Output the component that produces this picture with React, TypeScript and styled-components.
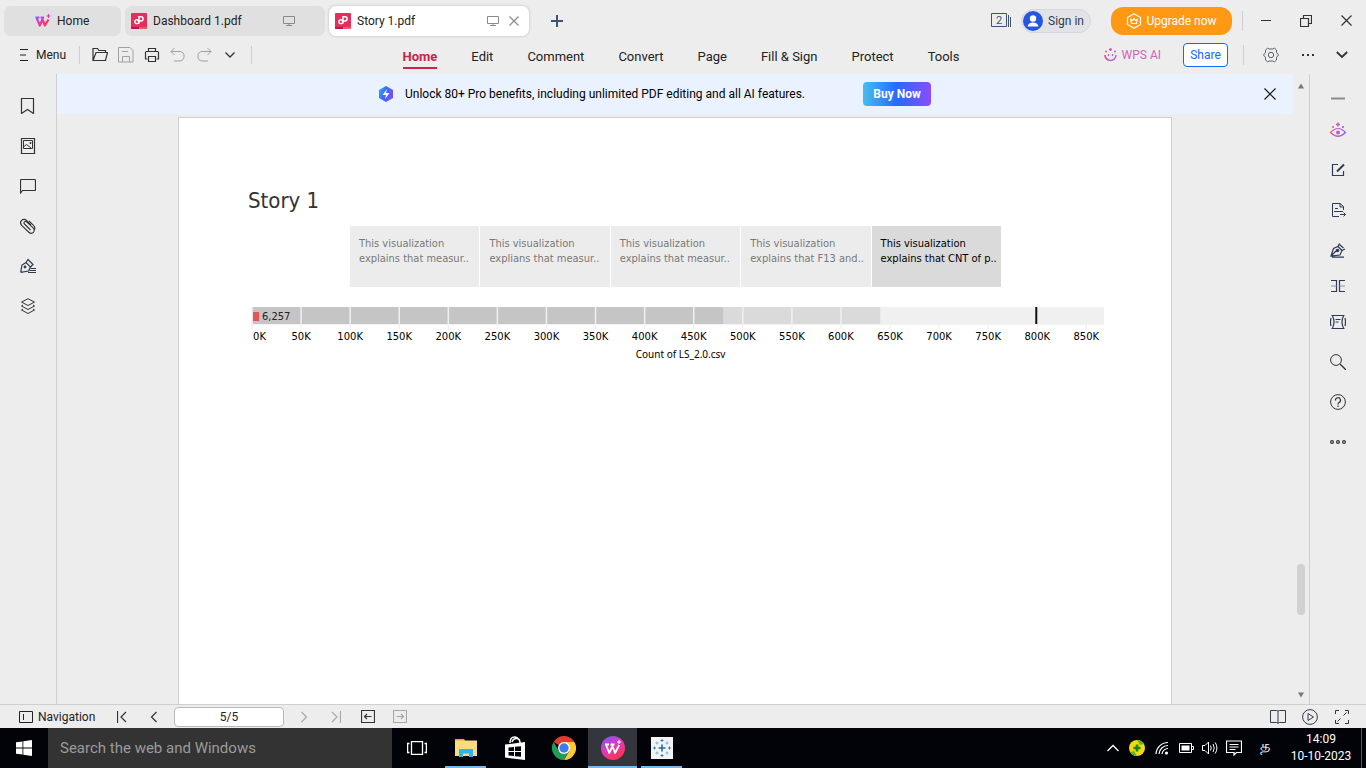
import React, { useState } from "react";
import styled, { createGlobalStyle, css } from "styled-components";

const ui = `Roboto, "Noto Sans", "Liberation Sans", sans-serif`;
const book = `"DejaVu Sans Condensed", "DejaVu Sans", "Noto Sans", sans-serif`;

const GlobalStyle = createGlobalStyle`
  *, *::before, *::after { box-sizing: border-box; }
  body { margin: 0; font-family: ${ui}; font-size: 12px; line-height: 16px; color: #222; background: #ededed; }
  button { font: inherit; color: inherit; background: none; border: 0; padding: 0; margin: 0; cursor: pointer; }
  a { color: inherit; text-decoration: none; }
  h1, p { margin: 0; font-weight: 400; }
  svg { display: block; flex: none; }
`;

/* ---------- layout ---------- */

const Shell = styled.div`
  display: flex;
  flex-direction: column;
  height: 100vh;
  background: #ededed;
`;

const Row = css`
  display: flex;
  align-items: center;
`;

const Spacer = styled.div`
  flex: 1;
`;

const Divider = styled.span<{ $h?: number }>`
  width: 1px;
  height: ${(p) => p.$h ?? 18}px;
  background: #cfcfcf;
`;

const IconButton = styled.button<{ $w?: number; $h?: number; $color?: string }>`
  display: inline-flex;
  align-items: center;
  justify-content: center;
  flex: none;
  width: ${(p) => p.$w ?? 26}px;
  height: ${(p) => p.$h ?? 24}px;
  color: ${(p) => p.$color ?? "#333"};
`;

/* ---------- title bar ---------- */

const TitleBar = styled.header`
  ${Row}
  height: 41px;
  padding: 0 0 0 4px;
  gap: 4px;
`;

const Tab = styled.div<{ $active?: boolean; $home?: boolean }>`
  ${Row}
  width: ${(p) => (p.$home ? 117 : 200)}px;
  height: 30px;
  padding: 0 ${(p) => (p.$active ? 0 : 30)}px 0 ${(p) => (p.$home ? 31 : 6)}px;
  border-radius: 7px;
  background: ${(p) => (p.$active ? "#fff" : "#e0e0e0")};
  box-shadow: ${(p) => (p.$active ? "0 0 2px 1px #d4d4d4" : "none")};
`;

const TabLabel = styled.button`
  ${Row}
  flex: 1;
  gap: 6px;
  text-align: left;
  white-space: nowrap;
`;

const SignIn = styled.button`
  ${Row}
  width: 70px;
  height: 24px;
  gap: 5px;
  margin: 0 16px 0 5px;
  padding: 0 0 0 1px;
  border: 1px solid #d5d7dc;
  border-radius: 12px;
  background: #e2e3e7;
  color: #2f3a55;
`;

const Upgrade = styled.button`
  ${Row}
  justify-content: center;
  width: 121px;
  height: 28px;
  gap: 4px;
  margin-right: 6px;
  border-radius: 12px;
  background: #ff9812;
  color: #fff;
`;

const WindowButtons = styled.div`
  ${Row}
  margin-left: -1px;
`;

/* ---------- tool bar ---------- */

const ToolBar = styled.div`
  display: grid;
  grid-template-columns: 1fr auto 1fr;
  height: 33px;
  padding: 0 0 0 8px;
`;

const ToolGroup = styled.div<{ $end?: boolean }>`
  ${Row}
  height: 28px;
  justify-content: ${(p) => (p.$end ? "flex-end" : "flex-start")};
`;

const MenuButton = styled.button`
  ${Row}
  width: 71px;
  gap: 8px;
  padding-left: 12px;
`;

const GroupEnd = styled(Divider)`
  margin-left: 15px;
`;

const Ribbon = styled.nav`
  display: flex;
  gap: 34px;
  padding: 8px 12px 0 0;
  font-size: 13px;
`;

const RibbonTab = styled.a<{ $active?: boolean }>`
  height: 20px;
  font-weight: ${(p) => (p.$active ? 700 : 400)};
  color: ${(p) => (p.$active ? "#c8234a" : "#222")};
  border-bottom: 2px solid ${(p) => (p.$active ? "#c8234a" : "transparent")};
`;

const WpsAi = styled.button`
  ${Row}
  gap: 5px;
  margin-right: 22px;
  color: #cf63c0;
`;

const Share = styled.button`
  width: 45px;
  height: 24px;
  margin-right: 15px;
  border: 1px solid #0f6bff;
  border-radius: 4px;
  background: #fff;
  color: #0f6bff;
`;

/* ---------- work area ---------- */

const Body = styled.div`
  display: flex;
  flex: 1;
  min-height: 0;
`;

const Rail = styled.aside<{ $side: "left" | "right" }>`
  display: flex;
  flex-direction: column;
  align-items: center;
  flex: none;
  width: 57px;
  padding-top: ${(p) => (p.$side === "left" ? 12 : 13)}px;
  border: 0 solid #cfcfcf;
  border-width: ${(p) => (p.$side === "left" ? "0 1px 0 0" : "0 0 0 1px")};
`;

const Viewer = styled.main`
  display: flex;
  flex-direction: column;
  flex: 1;
  min-width: 0;
  gap: 3px;
  overflow: hidden;
`;

const Banner = styled.div`
  ${Row}
  flex: none;
  height: 40px;
  padding: 0 11px 0 321px;
  background: #ebf2ff;
  color: #000;
`;

const BannerText = styled.p`
  width: 458px;
  margin-left: 11px;
`;

const BuyNow = styled.a`
  width: 68px;
  height: 24px;
  line-height: 24px;
  border-radius: 4px;
  background: linear-gradient(90deg, #45bdf0, #246bff 50%, #8a4df8);
  color: #fff;
  font-weight: 700;
  text-align: center;
`;

const Paper = styled.article`
  flex: 1;
  margin: 0 121px;
  padding: 68px 66px 0 69px;
  border: 1px solid #d0d0d0;
  border-bottom: 0;
  background: #fff;
  font-family: ${book};
`;

const Title = styled.h1`
  font-size: 22px;
  line-height: 30px;
  color: #333;
`;

const StoryPoints = styled.div`
  display: grid;
  grid-template-columns: repeat(5, minmax(0, 1fr));
  gap: 1px;
  margin: 10px 104px 20px 102px;
`;

const StoryPoint = styled.button<{ $active?: boolean }>`
  height: 61px;
  padding: 0 0 11px 9px;
  background: ${(p) => (p.$active ? "#dadada" : "#ececec")};
  color: ${(p) => (p.$active ? "#000" : "#787878")};
  font-family: ${book};
  font-size: 11px;
  line-height: 15px;
  text-align: left;
  white-space: nowrap;
`;

const Chart = styled.svg`
  width: calc(100% - 5px);
  height: 60px;
  margin-left: 4px;
  font-family: "DejaVu Sans", sans-serif;
  font-size: 10px;
  overflow: visible;
`;

const AxisTitle = styled.text`
  font-family: "Noto Sans", sans-serif;
`;

const BarValue = styled.text`
  font-family: ${book};
  font-size: 11px;
  fill: #222;
`;

const ScrollBar = styled.div`
  display: flex;
  flex-direction: column;
  align-items: center;
  flex: none;
  width: 16px;
  padding: 9px 0 6px;
`;

const Track = styled.div`
  flex: 1;
  display: flex;
  flex-direction: column;
  justify-content: flex-end;
  padding-bottom: 77px;
`;

const Thumb = styled.div`
  width: 8px;
  height: 51px;
  border-radius: 4px;
  background: #d1d1d1;
`;

/* ---------- status bar and task bar ---------- */

const StatusBar = styled.footer`
  ${Row}
  flex: none;
  height: 24px;
  padding: 0 8px 0 19px;
  border-top: 1px solid #cfcfcf;
`;

const NavToggle = styled.button`
  ${Row}
  width: 87px;
  gap: 5px;
`;

const PageInput = styled.input`
  width: 110px;
  height: 20px;
  margin: 0 4px;
  padding: 0;
  border: 1px solid #b8b8b8;
  border-radius: 4px;
  background: #fff;
  font: inherit;
  color: #222;
  text-align: center;
`;

const TaskBar = styled.div`
  ${Row}
  flex: none;
  height: 40px;
  background: #010308;
  color: #fff;
`;

const Search = styled.input`
  width: 344px;
  height: 40px;
  padding: 0 12px;
  border: 0;
  background: #333;
  color: #fff;
  font: 15px ${ui};
  &::placeholder { color: #9b9b9b; opacity: 1; }
`;

const TaskButton = styled.button<{ $state?: "open" | "active" }>`
  display: flex;
  align-items: center;
  justify-content: center;
  width: 49px;
  height: 40px;
  border: 0 solid #010308;
  border-width: 0 4px;
  ${(p) => p.$state === "open" && css`box-shadow: inset 0 -2px #76b9ed;`}
  ${(p) => p.$state === "active" && css`border-width: 0; background: #33363c; box-shadow: inset 0 -2px #76b9ed;`}
`;

const Clock = styled.time`
  width: 76px;
  margin-right: 2px;
  line-height: 17px;
  text-align: center;
`;

const Language = styled.button`
  width: 37px;
  padding-bottom: 4px;
  font-size: 16px;
`;

const EdgeLine = styled.span`
  width: 5px;
  height: 40px;
  border-left: 1px solid #55585d;
`;

/* ---------- icons ---------- */

type IconProps = { w?: number; h?: number; sw?: number; children: React.ReactNode };

const Icon = ({ w = 16, h = 16, sw = 1, children }: IconProps) => (
  <svg width={w} height={h} viewBox={`0 0 ${w} ${h}`} fill="none" stroke="currentColor" strokeWidth={sw} aria-hidden="true">
    {children}
  </svg>
);

const WpsMark = () => (
  <svg width="16" height="16" viewBox="0 0 16 16" fill="none" aria-hidden="true">
    <defs>
      <linearGradient id="wps" x1="0" y1="0" x2="1" y2="0.6">
        <stop offset="0" stopColor="#7d63ff" />
        <stop offset="0.5" stopColor="#e23bb6" />
        <stop offset="1" stopColor="#ff3348" />
      </linearGradient>
    </defs>
    <path d="M.5 4.500h4M1.500 4.500 4.800 12.500 8 5M7 4.500 9.800 12.500 13.500 6.500M5.500 4.500H9" stroke="url(#wps)" strokeWidth="2.200" strokeLinejoin="round" />
    <path d="M13.500 1v4M11.500 3h4" stroke="#d93bd0" strokeWidth="1.200" />
  </svg>
);

const PdfMark = () => (
  <svg width="16" height="16" viewBox="0 0 16 16" fill="none" aria-hidden="true">
    <rect width="16" height="16" rx="1" fill="#e2305c" />
    <path d="M0 14h8v2H1a1 1 0 0 1-1-1z" fill="#c21250" />
    <path d="M8 14h8v1a1 1 0 0 1-1 1H8z" fill="#ff5470" />
    <path d="M8 10.500V3.700h2a2.100 2.100 0 0 1 0 4.200H8" stroke="#fff" strokeWidth="1.500" />
    <circle cx="5.800" cy="8.700" r="1.900" stroke="#fff" strokeWidth="1.400" />
  </svg>
);

const Monitor = () => (
  <Icon w={12} h={12}>
    <path d="M.5 1.500h11v7H.5zM6 8.500v2M3 10.500h6" stroke="#8a8a8a" />
  </Icon>
);

const Cross = ({ size = 10, color = "currentColor" }: { size?: number; color?: string }) => (
  <Icon w={size} h={size}>
    <path d={`M.5.5 ${size - 0.5} ${size - 0.5}M${size - 0.5}.5.5 ${size - 0.5}`} stroke={color} strokeWidth="1.200" />
  </Icon>
);

const leftRail: [string, React.ReactNode][] = [
  ["Bookmarks", <path d="M1.500.5h12v15l-6-4-6 4z" strokeWidth="1.200" />],
  ["Thumbnails", <g><path d="M1.500.5h13v15h-13z" strokeWidth="1.200" /><path d="M3.500 2.500h9v8h-9zM4 8.500 6.500 6.500 11 10" /><path d="M10 4.500h1v1h-1z" /></g>],
  ["Comments", <path d="M.5 15V2.500q0-1 1-1h13q1 0 1 1v9q0 1-1 1h-12z" strokeWidth="1.200" />],
  ["Attachments", <path d="M10.500 12 4.500 6a1.500 1.500 0 0 1 2.200-2.200l6.600 6.400a2.900 2.900 0 0 1-4.200 4.300L1.700 7.300A3.400 3.400 0 0 1 6.500 2.300L11 6.800M9 2.800l4.500 4.500a4 4 0 0 1 1 4.500" strokeWidth="1.100" />],
  ["Signatures", <g stroke="#2f3a4d" strokeWidth="1.200"><path d="M.7 14.300 2 7 6 4.500l4.500 4.500-2 4L.7 14.300M6 4.500 8 1.500l5 5-2.500 2.500" /><circle cx="5" cy="9" r=".8" /><path d="M10.500 10.500h5.500M9.500 12.500H16M8 14.500h8" /></g>],
  ["Layers", <g><path d="m8 .7 6.500 3.400L8 7.500 1.500 4.100z" /><path d="M3 7 1.500 8 8 11.500 14.500 8 13 7M3 11l-1.500 1L8 15.500 14.500 12 13 11" /></g>],
];

const ViewAi = () => (
  <svg width="18" height="18" viewBox="0 0 18 18" fill="none" aria-hidden="true">
    <defs>
      <linearGradient id="eye" x1="0" y1="0" x2="1" y2="0">
        <stop offset="0" stopColor="#ee5b82" />
        <stop offset="1" stopColor="#8a63ff" />
      </linearGradient>
    </defs>
    <path d="M1.500 11.500Q9 3.500 16.500 11.500 9 19 1.500 11.500z" stroke="url(#eye)" strokeWidth="1.200" />
    <circle cx="9" cy="11.500" r="2" fill="#b45fd8" />
    <path d="M9 1.500v4M7 3.500h4" stroke="#c65cc0" strokeWidth="1.400" />
    <circle cx="4" cy="6" r="1.100" fill="#ee5b82" />
    <circle cx="14" cy="6" r="1.100" fill="#8a63ff" />
  </svg>
);

const rightRail: [string, number, React.ReactNode][] = [
  ["Collapse", 23, <path d="M1 7.500h14" stroke="#8c8c8c" strokeWidth="2" />],
  ["AI view", 40, null],
  ["Edit", 40, <g><path d="M8 2.500H2.500v11h11V9" strokeWidth="1.200" /><path d="m7 9.500 7-7" strokeWidth="2" /></g>],
  ["Export", 40, <g><path d="M13.500 8V4.500L10 1.500H2.500v13H9M10 1.500v3.500h3.500M5 6.500h3M4 9.500h9M10 12.500h5M13.500 10.500l2 2-2 2" /></g>],
  ["Sign", 40, <g strokeWidth="1.200"><path d="M1 14 3.500 6.500 8 4.500l4 4-2 4.500zM1 14l5-5M8 4.500 9.500 1.500M12 8.500l3-1.500M9.500 2.500l4 3.500M2 15.200h12" /><circle cx="7.500" cy="8.500" r="1.200" fill="currentColor" /></g>],
  ["Compare", 32, <g strokeWidth="1.200"><path d="M1 2.500h5.500v11H1M15 2.500H9.500v11H15" /><path d="M1 8h5.500M9.500 8H15" stroke="#8a93a3" /></g>],
  ["Slideshow", 40, <path d="M1.500 1.500h13M1.500 14.500h13M2.500 2q3 6 0 12M13.500 2q-3 6 0 12M1 4q-1 4 0 8M15 4q1 4 0 8M5.500 5.500h5M5.500 8h3" strokeWidth="1.200" />],
  ["Find", 40, <g stroke="#333"><circle cx="6" cy="6" r="5.400" /><path d="m10 10 6 6" strokeWidth="1.300" /></g>],
  ["Help", 40, <g stroke="#333"><circle cx="8" cy="8" r="7.400" /><path d="M5.500 6.500a2.500 2.500 0 1 1 3.500 2q-1 .5-1 2M8 11.500v1.500" strokeWidth="1.200" /></g>],
  ["More", 40, <g stroke="#333" strokeWidth="1.200"><circle cx="2" cy="8" r="1.400" /><circle cx="8" cy="8" r="1.400" /><circle cx="14" cy="8" r="1.400" /></g>],
];

/* ---------- data ---------- */

const ribbonTabs = ["Home", "Edit", "Comment", "Convert", "Page", "Fill & Sign", "Protect", "Tools"];

const storyPoints = [
  ["This visualization", "explains that measur.."],
  ["This visualization", "explians that measur.."],
  ["This visualization", "explains that measur.."],
  ["This visualization", "explains that F13 and.."],
  ["This visualization", "explains that CNT of p.."],
];

const AXIS_MAX = 868;
const pos = (k: number) => `${((k / AXIS_MAX) * 100).toFixed(3)}%`;
const ticks = Array.from({ length: 18 }, (_, i) => i * 50);

const BulletChart = () => (
  <Chart role="img" aria-label="Count of LS_2.0.csv">
    <rect width="100%" height="17" fill="#f0f0f0" />
    <rect width={pos(640)} height="17" fill="#dadada" />
    <rect width={pos(480)} height="17" fill="#c5c5c5" />
    {ticks.map((k) => (
      <g key={k}>
        <line x1={pos(k)} x2={pos(k)} y1="0" y2="17" stroke="#f0f0f0" strokeWidth="1.500" />
        <line x1={pos(k)} x2={pos(k)} y1="18" y2="22" stroke="#ececec" />
      </g>
    ))}
    <line x1="0" x2="100%" y1="17.5" y2="17.5" stroke="#f3f3f3" />
    <rect x="1" y="5" width={pos(6.257)} height="9" fill="#e15759" />
    <BarValue x="10" y="13">6,257</BarValue>
    <line x1={pos(799)} x2={pos(799)} y1="0" y2="17" stroke="#111" strokeWidth="2" />
    {ticks.map((k) => (
      <text key={k} x={k ? pos(k) : 1} y="33" textAnchor={k ? "middle" : "start"}>{k}K</text>
    ))}
    <AxisTitle x="50.300%" y="51" textAnchor="middle">Count of LS_2.0.csv</AxisTitle>
  </Chart>
);

/* ---------- page ---------- */

export default function App() {
  const [page, setPage] = useState("5/5");
  return (
    <Shell>
      <GlobalStyle />
      <TitleBar>
        <Tab $home>
          <TabLabel><WpsMark />Home</TabLabel>
        </Tab>
        <Tab>
          <TabLabel><PdfMark />Dashboard 1.pdf</TabLabel>
          <Monitor />
        </Tab>
        <Tab $active>
          <TabLabel><PdfMark />Story 1.pdf</TabLabel>
          <Monitor />
          <IconButton $w={30} aria-label="Close tab"><Cross color="#8a8a8a" /></IconButton>
        </Tab>
        <IconButton $w={48} aria-label="New tab">
          <Icon w={12} h={12}><path d="M6 0v12M0 6h12" stroke="#3f5373" strokeWidth="2" /></Icon>
        </IconButton>
        <Spacer />
        <IconButton $w={22} aria-label="Windows">
          <svg width="21" height="15" viewBox="0 0 21 15" fill="none" stroke="#3f5373" aria-hidden="true">
            <path d="M.5.5h15v13H.5zM17.500 2v12M19.500 4v10" />
            <text x="8" y="11" fontSize="11" textAnchor="middle" fill="#3f5373" stroke="none">2</text>
          </svg>
        </IconButton>
        <SignIn>
          <svg width="20" height="20" viewBox="0 0 20 20" aria-hidden="true">
            <circle cx="10" cy="10" r="10" fill="#2456e0" />
            <circle cx="10" cy="7.500" r="3.200" fill="#fff" />
            <path d="M4.500 15.500q1-4 5.500-4t5.500 4z" fill="#fff" />
          </svg>
          Sign in
        </SignIn>
        <Upgrade>
          <Icon sw={1.2}>
            <path d="M8 .8 14.500 4.500v7L8 15.200 1.500 11.500v-7z" />
            <path d="M4.800 6.500 6.500 7.500 8 5.500l1.500 2 1.700-1-.7 4h-5z" />
          </Icon>
          Upgrade now
        </Upgrade>
        <Divider $h={20} />
        <WindowButtons>
          <IconButton $w={40} aria-label="Minimize"><Icon w={10} h={10}><path d="M0 4.500h10" /></Icon></IconButton>
          <IconButton $w={40} aria-label="Restore"><Icon w={12} h={12}><path d="M.5 3.500h8v8h-8zM3.500 3.500v-3h8v8h-3" strokeWidth="1.200" /></Icon></IconButton>
          <IconButton $w={40} aria-label="Close"><Cross size={11} /></IconButton>
        </WindowButtons>
      </TitleBar>

      <ToolBar>
        <ToolGroup>
          <MenuButton>
            <Icon w={8} h={12}><path d="M0 .5h8M0 6h6M0 11.500h8" /></Icon>
            Menu
          </MenuButton>
          <Divider />
          <IconButton $w={40} aria-label="Open">
            <Icon><path d="M1 13.500V1.500h4.500l1.500 2h6.500v2M1 13.500l3-8h11.500l-2 8z" strokeWidth="1.200" /></Icon>
          </IconButton>
          <IconButton $w={12} $color="#a0a0a0" aria-label="Save">
            <Icon><path d="M.5.5h11.500l3 3v11.500H.5zM4.500 15V9.500h7V15M4 4.500h6" /></Icon>
          </IconButton>
          <IconButton $w={40} aria-label="Print">
            <Icon><path d="M4.500 4V1.500h7V4M3.500 12h-2V5.500q0-1 1-1h11q1 0 1 1V12h-2M4.500 9.500h7v5h-7z" strokeWidth="1.200" /></Icon>
          </IconButton>
          <IconButton $w={12} $color="#a0a0a0" aria-label="Undo">
            <Icon><path d="M4.500 1 1 4.500 4.500 8M1 4.500h9a4.800 4.800 0 0 1 0 9.500H4" /></Icon>
          </IconButton>
          <IconButton $w={40} $color="#a0a0a0" aria-label="Redo">
            <Icon><path d="M11.500 1 15 4.500 11.500 8M15 4.500H6A4.800 4.800 0 0 0 6 14h6" /></Icon>
          </IconButton>
          <IconButton $w={12} aria-label="More quick tools">
            <Icon w={10} h={6}><path d="m.5.5 4.500 4.500L9.500.5" strokeWidth="1.300" /></Icon>
          </IconButton>
          <GroupEnd />
        </ToolGroup>
        <Ribbon>
          {ribbonTabs.map((t, i) => (
            <RibbonTab key={t} href="#" $active={i === 0}>{t}</RibbonTab>
          ))}
        </Ribbon>
        <ToolGroup $end>
          <WpsAi>
            <svg width="13" height="14" viewBox="0 0 13 14" fill="none" aria-hidden="true">
              <path d="M1 7a5.500 5.500 0 0 0 11 0" stroke="#b567e0" strokeWidth="1.500" />
              <path d="M1 7a5.500 5.500 0 0 0 3 5" stroke="#ee5b82" strokeWidth="1.500" />
              <path d="M6.500 0v3M5 1.500h3M4.500 6v2M8.500 6v2" stroke="#d65aa8" strokeWidth="1.300" />
              <circle cx="2" cy="3.500" r="1" fill="#ee5b82" />
              <circle cx="11" cy="3.500" r="1" fill="#a065f0" />
            </svg>
            WPS AI
          </WpsAi>
          <Share>Share</Share>
          <Divider $h={20} />
          <IconButton $w={54} $color="#5b5f66" aria-label="Settings">
            <Icon>
              <path d="M4.500 1.200 6.500 2h3l2-.8 2 1.800v2.500l2 2.500-2 2.500V13l-2 1.800-2-.8h-3l-2 .8-2-1.800v-2.500l-2-2.500 2-2.500V3z" />
              <circle cx="8" cy="8" r="2.700" />
            </Icon>
          </IconButton>
          <IconButton $w={20} aria-label="More">
            <Icon w={14} h={4}><path d="M1 2h2M6 2h2M11 2h2" strokeWidth="2" /></Icon>
          </IconButton>
          <IconButton $w={48} aria-label="Collapse ribbon">
            <Icon w={12} h={8}><path d="m.8 1 5.200 5 5.200-5" strokeWidth="1.800" /></Icon>
          </IconButton>
        </ToolGroup>
      </ToolBar>

      <Body>
        <Rail $side="left">
          {leftRail.map(([name, art]) => (
            <IconButton key={name} $w={40} $h={40} aria-label={name}><Icon>{art}</Icon></IconButton>
          ))}
        </Rail>
        <Viewer>
          <Banner>
            <svg width="16" height="16" viewBox="0 0 16 16" aria-hidden="true">
              <defs>
                <linearGradient id="pro" x1="0" y1="0" x2="1" y2="0.5">
                  <stop offset="0" stopColor="#25b4f7" />
                  <stop offset="0.5" stopColor="#3b6cff" />
                  <stop offset="1" stopColor="#7a4df5" />
                </linearGradient>
              </defs>
              <path d="M8 0 15 4v8l-7 4-7-4V4z" fill="url(#pro)" />
              <path d="M9 3 4.500 9H8l-1 4 4.500-6H8z" fill="#fff" />
            </svg>
            <BannerText>Unlock 80+ Pro benefits, including unlimited PDF editing and all AI features.</BannerText>
            <BuyNow href="#">Buy Now</BuyNow>
            <Spacer />
            <IconButton $w={24} $color="#111" aria-label="Dismiss"><Cross size={12} /></IconButton>
          </Banner>
          <Paper>
            <Title>Story 1</Title>
            <StoryPoints>
              {storyPoints.map(([a, b], i) => (
                <StoryPoint key={i} $active={i === 4}>{a}<br />{b}</StoryPoint>
              ))}
            </StoryPoints>
            <BulletChart />
          </Paper>
        </Viewer>
        <ScrollBar>
          <Icon w={6} h={6}><path d="M0 5.500 3 .5l3 5z" fill="#777" stroke="none" /></Icon>
          <Track><Thumb /></Track>
          <Icon w={6} h={6}><path d="M0 .5l3 5 3-5z" fill="#777" stroke="none" /></Icon>
        </ScrollBar>
        <Rail $side="right">
          {rightRail.map(([name, h, art]) => (
            <IconButton key={name} $w={40} $h={h} $color="#2f3a55" aria-label={name}>
              {art ? <Icon>{art}</Icon> : <ViewAi />}
            </IconButton>
          ))}
        </Rail>
      </Body>

      <StatusBar>
        <NavToggle>
          <Icon w={14} h={12}><path d="M.5.5h13v11H.5zM4.500 3v6" /></Icon>
          Navigation
        </NavToggle>
        <IconButton $w={32} aria-label="First page"><Icon w={10} h={12}><path d="M.5 0v12M9 1 4 6l5 5" strokeWidth="1.200" /></Icon></IconButton>
        <IconButton $w={32} aria-label="Previous page"><Icon w={8} h={12}><path d="M6.500 1l-5 5 5 5" strokeWidth="1.200" /></Icon></IconButton>
        <PageInput aria-label="Page" value={page} onChange={(e) => setPage(e.target.value)} />
        <IconButton $w={32} $color="#a8a8a8" aria-label="Next page"><Icon w={8} h={12}><path d="M1.500 1l5 5-5 5" strokeWidth="1.200" /></Icon></IconButton>
        <IconButton $w={32} $color="#a8a8a8" aria-label="Last page"><Icon w={10} h={12}><path d="M9.500 0v12M1 1l5 5-5 5" strokeWidth="1.200" /></Icon></IconButton>
        <IconButton $w={32} aria-label="Back"><Icon w={14} h={13}><path d="M.5.5h13v12H.5zM3.500 6.500h7M6 4 3.500 6.500 6 9" strokeWidth="1.200" /></Icon></IconButton>
        <IconButton $w={32} $color="#a8a8a8" aria-label="Forward"><Icon w={14} h={13}><path d="M.5.5h13v12H.5zM3.500 6.500h7M8 4l2.500 2.500L8 9" strokeWidth="1.200" /></Icon></IconButton>
        <Spacer />
        <IconButton $w={32} $color="#333c4d" aria-label="Reading view"><Icon><path d="M.5 1.500h6q1.500 0 1.500 1 0-1 1.500-1h6v12h-6q-1.500 0-1.500 1 0-1-1.500-1h-6zM8 2.500v12" /></Icon></IconButton>
        <IconButton $w={32} $color="#333c4d" aria-label="Play"><Icon><circle cx="8" cy="8" r="7.400" /><path d="m6 4.500 5.500 3.500L6 11.500z" /></Icon></IconButton>
        <IconButton $w={32} aria-label="Full screen"><Icon w={14} h={14}><path d="M.5 4V.5H4M10 .5h3.500V4M.5 10v3.500H4M10 13.500h3.500V10M2.500 11.500l3-3M8.500 5.500l3-3" /></Icon></IconButton>
      </StatusBar>

      <TaskBar>
        <IconButton $w={48} $h={40} $color="#fff" aria-label="Start">
          <Icon><path d="M0 2.300 6.500 1.400v6.100H0zM7.300 1.300 16 0v7.500H7.300zM0 8.400h6.500v6.200L0 13.700zM7.300 8.400H16V16l-8.700-1.300z" fill="#fff" stroke="none" /></Icon>
        </IconButton>
        <Search aria-label="Search" placeholder="Search the web and Windows" />
        <TaskButton aria-label="Task view">
          <Icon w={20} h={14} sw={1.3}><path d="M4.500.5h11v13h-11zM2.500 2.500H.6v9h1.900M17.500 2.500h1.900v9h-1.900" /></Icon>
        </TaskButton>
        <TaskButton $state="open" aria-label="File Explorer">
          <svg width="22" height="20" viewBox="0 0 22 20" aria-hidden="true">
            <path d="M0 1h9l1.500 2H0z" fill="#e8a726" />
            <path d="M0 2.500h22V18H0z" fill="#fbdc7c" />
            <path d="M4 19V11h14v8h-4v-3.500H8V19z" fill="#2fb4ea" />
          </svg>
        </TaskButton>
        <TaskButton aria-label="Store">
          <svg width="22" height="24" viewBox="0 0 22 24" aria-hidden="true">
            <path d="M6 7q0-6 4.500-6 3 0 4 2.500M8 6q1-3.500 4.500-3.500Q16 2.500 16 7" fill="none" stroke="#fff" strokeWidth="1.500" />
            <path d="M1 8.500 21 6v18L1 21.500z" fill="#fff" />
            <path d="M4.500 11.500 10 11v4H4.500zM11 10.800l6-.6V15h-6zM4.500 16H10v4l-5.500-.5zM11 16h6v4.800l-6-.6z" fill="#010308" />
          </svg>
        </TaskButton>
        <TaskButton aria-label="Chrome">
          <svg width="24" height="24" viewBox="0 0 24 24" aria-hidden="true">
            <path d="M12 12 1.600 6A12 12 0 0 1 22.400 6H12z" fill="#e33b2e" />
            <path d="M12 6h10.400A12 12 0 0 1 12 24l5.200-9z" fill="#fcc934" />
            <path d="M1.600 6A12 12 0 0 0 12 24l5.200-9L12 12 6.800 15z" fill="#1f9d54" />
            <circle cx="12" cy="12" r="6" fill="#fff" />
            <circle cx="12" cy="12" r="4.700" fill="#3b7ded" />
          </svg>
        </TaskButton>
        <TaskButton $state="active" aria-label="WPS Office">
          <svg width="24" height="24" viewBox="0 0 24 24" aria-hidden="true">
            <defs>
              <linearGradient id="office" x1="0" y1="0" x2="0.600" y2="1">
                <stop offset="0" stopColor="#6a5cff" />
                <stop offset="0.5" stopColor="#dc3bc0" />
                <stop offset="1" stopColor="#ff3350" />
              </linearGradient>
            </defs>
            <circle cx="12" cy="12" r="12" fill="url(#office)" />
            <path d="M4 8.500h4M5 8.500l3.200 8.500L12 9M11 8.500l3 8.500 4.200-8M9.500 8.500h4" fill="none" stroke="#fff" strokeWidth="1.800" strokeLinejoin="round" />
            <path d="M18 4v4M16 6h4" stroke="#fff" />
          </svg>
        </TaskButton>
        <TaskButton $state="open" aria-label="Tableau">
          <svg width="22" height="22" viewBox="0 0 22 22" aria-hidden="true">
            <rect width="22" height="22" fill="#f1f3f5" />
            <path d="M11 7.500v7M7.500 11h7" stroke="#1f6ea8" strokeWidth="1.600" />
            <path d="M11 2v3M9.500 3.500h3M11 17v3M9.500 18.500h3M3.500 9.500v3M2 11h3M18.500 9.500v3M17 11h3" stroke="#3c7fae" />
            <path d="M6 4.500v3M4.500 6h3M16 4.500v3M14.500 6h3M6 14.500v3M4.500 16h3M16 14.500v3M14.500 16h3" stroke="#7fb0d2" />
          </svg>
        </TaskButton>
        <Spacer />
        <IconButton $w={24} $color="#fff" aria-label="Show hidden icons"><Icon w={12} h={8}><path d="m.5 7 5.500-5.500L11.500 7" strokeWidth="1.300" /></Icon></IconButton>
        <IconButton $w={24} aria-label="Updates">
          <svg width="16" height="16" viewBox="0 0 16 16" aria-hidden="true">
            <circle cx="8" cy="8" r="8" fill="#f5d90f" />
            <path d="M8 0a8 8 0 0 1 7 4l-4 1zM8 16a8 8 0 0 1-7-4l4-1z" fill="#5fb52a" />
            <path d="M8 4.500v7M4.500 8h7" stroke="#138a1f" strokeWidth="2.600" />
          </svg>
        </IconButton>
        <IconButton $w={25} $color="#fff" aria-label="Network">
          <Icon w={14} h={14}><path d="M1 13A12 12 0 0 1 13 1.500M4 13a9 9 0 0 1 9-8.500M7 13a6 6 0 0 1 6-5.500" strokeWidth="1.200" /><circle cx="11.500" cy="12" r="1.600" fill="#fff" stroke="none" /></Icon>
        </IconButton>
        <IconButton $w={24} $color="#fff" aria-label="Battery">
          <Icon w={15} h={10}><path d="M.5.5h12v9H.5zM13 3.500h1.500v3H13" /><path d="M2.500 2.500h8v5h-8z" fill="#fff" stroke="none" /></Icon>
        </IconButton>
        <IconButton $w={24} $color="#fff" aria-label="Volume">
          <Icon><path d="M.5 5.500h2.500L6.500 2v12L3 10.500H.5zM8.500 5.500q1.500 2.500 0 5M11 4q2.500 4 0 8M13.200 2.500q3.500 5.500 0 11" /></Icon>
        </IconButton>
        <IconButton $w={24} $color="#fff" aria-label="Notifications">
          <Icon><path d="M.5 1h15v11.500h-5l-2.500 2.500v-2.500H.5zM3.500 4.500h9M3.500 7h9M3.500 9.500h6" strokeWidth="1.200" /></Icon>
        </IconButton>
        <Language aria-label="Tamil keyboard">த</Language>
        <Clock>14:09<br />10-10-2023</Clock>
        <EdgeLine />
      </TaskBar>
    </Shell>
  );
}
